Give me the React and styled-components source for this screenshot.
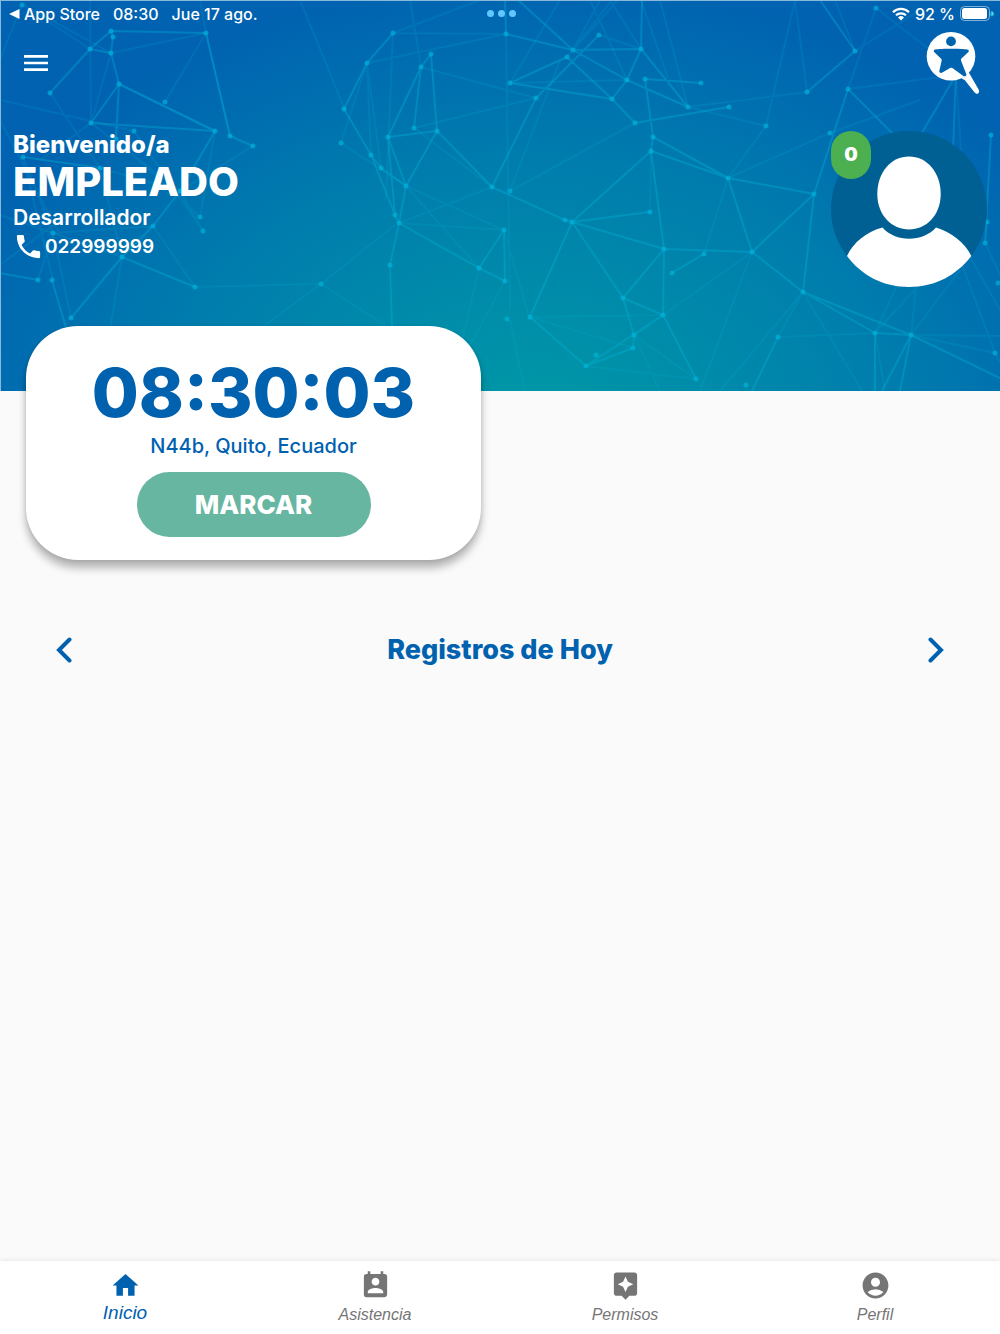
import React from "react";
import styled, { createGlobalStyle } from "styled-components";
import {
  MdHome,
  MdPermContactCalendar,
  MdAssistant,
  MdAccountCircle,
  MdMenu,
  MdPhone,
} from "react-icons/md";

const GlobalStyle = createGlobalStyle`
  *, *::before, *::after { box-sizing: border-box; }
  body {
    margin: 0;
    background: #fafafa;
    font-family: Inter, Roboto, "Liberation Sans", sans-serif;
  }
  h1, h2, p { margin: 0; }
  button { font-family: inherit; border: 0; padding: 0; cursor: pointer; }
`;

const Screen = styled.div`
  min-height: 100vh;
  display: flex;
  flex-direction: column;
`;

const Header = styled.header`
  display: grid;
  border-top: 1px solid #86b9dc;
  border-left: 1px solid #86b9dc;
  background: radial-gradient(ellipse 62% 114% at 53% 108%, #0099a6 0%, #008aaa 32%, #007cad 60%, #006eb0 82%, #0062b0 100%);
  color: #fff;
  overflow: hidden;
`;

const Network = styled.svg`
  grid-area: 1 / 1;
  width: 100%;
  height: 390px;
`;

const HeaderContent = styled.div`
  grid-area: 1 / 1;
  z-index: 1;
  display: flex;
  flex-direction: column;
`;

const StatusBar = styled.div`
  display: grid;
  grid-template-columns: 1fr auto 1fr;
  align-items: center;
  height: 25px;
  padding: 0 6px 0 8px;
  font-size: 16px;
  font-weight: 500;
  line-height: 20px;
`;

const StatusGroup = styled.div`
  display: flex;
  align-items: center;
  justify-content: ${(p) => (p.$end ? "flex-end" : "flex-start")};
  gap: ${(p) => p.$gap}px;
`;

const BackLink = styled.a`
  display: flex;
  align-items: center;
  gap: 4px;
  color: inherit;
  text-decoration: none;
`;

const Dots = styled.button`
  display: flex;
  gap: 4px;
  background: none;
`;

const Dot = styled.span`
  width: 7px;
  height: 7px;
  border-radius: 50%;
  background: #62c6ff;
`;

const Toolbar = styled.div`
  display: flex;
  align-items: center;
  justify-content: space-between;
  height: 74px;
  padding: 0 20px 0 19px;
`;

const IconButton = styled.button`
  display: flex;
  background: none;
  color: ${(p) => p.$color || "#fff"};
`;

const Profile = styled.section`
  display: flex;
  justify-content: space-between;
  align-items: flex-start;
  padding: 31px 13px 0 12px;
`;

const Person = styled.div`
  display: flex;
  flex-direction: column;
`;

const Greeting = styled.p`
  font-size: 24px;
  font-weight: 800;
  line-height: 28px;
`;

const Name = styled.h1`
  font-size: 40px;
  font-weight: 800;
  line-height: 46px;
`;

const Role = styled.p`
  font-size: 21px;
  font-weight: 600;
  line-height: 26px;
`;

const Phone = styled.a`
  display: flex;
  align-items: center;
  gap: 1px;
  color: inherit;
  font-size: 19px;
  font-weight: 600;
  line-height: 28px;
  text-decoration: none;
`;

const AvatarButton = styled.button`
  position: relative;
  width: 156px;
  height: 156px;
  border-radius: 50%;
  background: #005f93;
`;

const Badge = styled.span`
  position: absolute;
  top: 0;
  left: 0;
  width: 40px;
  height: 48px;
  border-radius: 20px;
  background: #4caf50;
  color: #fff;
  font-size: 19px;
  font-weight: 900;
  line-height: 48px;
  text-align: center;
`;

const Main = styled.main`
  flex: 1;
`;

const ClockCard = styled.section`
  position: relative;
  z-index: 2;
  display: flex;
  flex-direction: column;
  align-items: center;
  width: 46%;
  min-width: 340px;
  max-width: 455px;
  margin: -65px 0 0 26px;
  padding: 32px 16px 23px;
  border-radius: 52px;
  background: #fff;
  box-shadow: 0 8px 9px rgba(0, 0, 0, 0.28), 0 1px 4px rgba(0, 0, 0, 0.1);
  color: #0061af;
`;

const Clock = styled.time`
  font-size: 68px;
  font-weight: 800;
  line-height: 68px;
`;

const Place = styled.p`
  margin: 8px 0 14px;
  font-size: 20px;
  font-weight: 500;
  line-height: 24px;
`;

const MarkButton = styled.button`
  width: 234px;
  height: 65px;
  border-radius: 33px;
  background: #66b6a1;
  color: #fff;
  font-size: 26px;
  font-weight: 800;
`;

const DayPicker = styled.section`
  display: flex;
  align-items: center;
  justify-content: space-between;
  padding: 74px 56px 0;
  color: #0061af;
`;

const DayTitle = styled.h2`
  font-size: 27px;
  font-weight: 800;
  line-height: 32px;
`;

const TabBar = styled.nav`
  display: grid;
  grid-template-columns: repeat(4, 1fr);
  height: 73px;
  background: #fff;
  box-shadow: 0 -1px 4px rgba(0, 0, 0, 0.08);
`;

const Tab = styled.a`
  display: flex;
  flex-direction: column;
  align-items: center;
  padding-top: 9px;
  gap: ${(p) => (p.$active ? 1 : 4)}px;
  color: ${(p) => (p.$active ? "#0061af" : "#757575")};
  font-family: "Liberation Sans", Arial, sans-serif;
  font-size: ${(p) => (p.$active ? 19 : 16)}px;
  font-style: italic;
  line-height: ${(p) => (p.$active ? 22 : 20)}px;
  text-decoration: none;
`;

const bright = [
  [111,31,90,49],[90,49,50,93],[111,31,113,37],[113,37,111,53],[90,49,111,53],[111,31,206,33],
  [111,53,119,84],[119,84,91,123],[91,123,215,131],[119,84,215,131],[119,84,116,139],
  [230,136,253,146],[206,33,230,136],[215,131,180,191],[180,191,153,226],[153,226,122,257],[122,257,71,318],
  [23,157,100,168],[38,280,0,273],[52,280,66,328],[122,257,195,287],
  [393,33,367,63],[367,63,344,109],[344,109,371,155],[371,155,381,168],[381,168,406,186],[371,155,395,215],
  [506,34,573,50],[506,34,505,0],[573,50,641,49],[573,50,627,80],[573,50,518,0],
  [567,57,510,83],[567,57,612,99],[599,35,536,98],[510,83,612,99],[641,49,627,80],[627,80,612,99],
  [612,99,635,123],[635,123,729,107],[627,80,688,107],[645,79,701,83],[641,49,688,107],[641,49,642,0],
  [431,54,421,67],[421,67,414,128],[431,54,437,131],[421,67,388,137],[388,137,437,131],
  [388,137,406,186],[437,131,406,186],[437,131,492,187],[388,137,395,215],[406,186,399,223],
  [395,215,399,223],[399,223,390,265],[390,265,392,330],[399,223,479,268],[479,268,505,281],[479,268,504,230],
  [504,230,505,281],[492,187,565,220],[492,187,536,98],[565,220,572,222],[572,222,651,151],
  [572,222,650,212],[572,222,664,249],[572,222,623,298],[572,222,530,317],[645,79,653,137],[653,137,651,151],
  [651,151,664,249],[653,137,728,178],[651,151,728,178],[664,249,623,298],[664,249,663,315],
  [623,298,663,315],[623,298,634,335],[663,315,634,335],[663,315,586,366],[633,348,586,366],[586,366,530,317],
  [634,335,633,348],[663,315,696,379],[664,249,752,252],[672,273,704,254],[728,178,752,252],
  [728,178,814,194],[752,252,814,194],[752,252,803,292],[814,194,803,292],
  [814,194,848,89],[803,292,875,333],[803,292,911,335],[778,337,752,391],
  [875,333,911,335],[911,335,1000,378],[911,335,882,391],[911,335,900,391],[875,333,875,391],
  [848,89,893,134],[807,92,855,51],[855,51,820,0],
  [956,75,920,136],[956,75,953,150],[991,135,985,243],[985,243,987,222],
];

const faint = [
  [22,4,0,60],[22,4,90,49],[22,4,111,53],[90,0,91,123],[111,53,91,123],[111,53,206,33],[206,33,200,0],
  [165,102,206,33],[230,136,206,33],[134,131,203,231],[0,100,134,131],[119,84,215,131],[23,157,53,233],
  [50,93,100,168],[0,120,60,235],[0,215,53,233],[0,265,60,220],[23,157,53,280],[91,123,180,191],
  [91,123,40,160],[116,139,200,217],[100,168,122,257],[100,168,180,191],[53,233,153,226],
  [53,233,71,318],[53,233,38,280],[53,233,122,257],[180,191,253,146],[180,191,203,231],[215,131,200,217],
  [300,0,345,110],[153,226,195,287],[195,287,321,284],
  [122,257,110,330],[321,284,385,325],[321,284,395,225],[265,325,321,284],
  [393,33,386,200],[393,33,480,0],[393,33,506,34],[367,63,506,34],[367,63,381,168],[367,63,371,155],
  [341,143,367,63],[341,143,406,186],[410,0,421,67],[421,67,536,98],[414,128,536,98],[414,128,492,187],
  [506,34,510,310],[510,83,627,80],[510,83,560,0],[510,191,560,60],[510,191,635,123],[492,187,399,223],
  [573,50,600,0],[573,50,618,0],[567,57,612,0],[641,49,610,0],[627,80,590,0],[599,35,641,49],
  [668,78,641,0],[688,107,660,0],[688,107,807,92],[688,107,766,126],[766,126,728,178],
  [807,92,795,0],[766,126,795,0],[855,51,835,0],[855,51,920,10],[848,89,876,8],[848,89,956,75],
  [876,8,930,50],[830,133,728,178],[830,133,920,100],[406,186,504,230],[956,75,961,150],
  [406,186,479,268],[399,223,504,230],[479,268,460,350],[505,281,462,360],[985,243,1000,275],
  [504,230,530,320],[510,320,525,391],[530,317,663,315],[530,317,633,348],[586,366,696,379],
  [634,335,696,379],[650,212,651,151],[803,292,720,391],[752,252,700,391],[752,252,663,315],
  [803,292,862,391],[803,292,778,337],[778,337,875,333],[875,333,960,240],[911,335,960,270],
  [875,333,897,285],[911,335,916,287],[875,333,885,391],[911,335,1000,336],[995,353,1000,363],
  [953,240,995,353],[911,335,995,353],[955,230,1000,310],[728,178,704,254],[634,335,660,391],
];

const nodes = [
  [111,31],[113,37],[90,49],[111,53],[50,93],[119,84],[91,123],[134,131],[116,139],[165,102],[206,33],
  [215,131],[230,136],[253,146],[23,157],[100,168],[180,191],[153,226],[53,233],[122,257],[203,231],[200,217],
  [38,280],[52,280],[71,318],[195,287],[321,284],[22,5],[393,33],[367,63],[344,109],[341,143],[371,155],
  [381,168],[406,186],[431,54],[421,67],[414,128],[388,137],[437,131],[506,34],[573,50],[567,57],[510,83],
  [536,98],[599,35],[641,49],[627,80],[612,99],[635,123],[645,79],[653,137],[651,151],[492,187],[510,191],
  [395,215],[399,223],[390,265],[504,230],[479,268],[505,281],[507,319],[530,317],[565,220],[572,222],
  [650,212],[664,249],[623,298],[663,315],[634,335],[633,348],[586,366],[596,355],[701,83],[688,107],
  [729,107],[766,126],[807,92],[855,51],[876,8],[848,89],[830,133],[814,194],[728,178],[991,135],[704,254],
  [672,273],[752,252],[803,292],[778,337],[746,385],[696,379],[875,333],[911,335],[995,353],[985,243],
  [987,222],[998,283],[992,14],
];

function toPath(lines) {
  return lines.map(([a, b, c, d]) => `M${a} ${b}L${c} ${d}`).join("");
}

function NetworkArt() {
  return (
    <Network viewBox="1 1 999 390" preserveAspectRatio="xMidYMid slice" aria-hidden="true">
      <g fill="none" stroke="#00b4dc">
        <path d={toPath(faint)} strokeWidth="2" opacity="0.17" />
        <path d={toPath(bright)} strokeWidth="2" opacity="0.36" />
      </g>
      <g fill="#00b8e0" opacity="0.62">
        {nodes.map(([x, y]) => (
          <circle key={`${x}-${y}`} cx={x} cy={y} r="2.5" />
        ))}
      </g>
    </Network>
  );
}

function WifiIcon() {
  return (
    <svg width="18" height="14" viewBox="0 0 18 14" aria-hidden="true">
      <g fill="none" stroke="#fff" strokeWidth="2.2">
        <path d="M1 5.2a11.4 11.4 0 0 1 16 0" />
        <path d="M4 8.3a7.2 7.2 0 0 1 10 0" />
      </g>
      <path d="M9 13.4l-3-3a4.3 4.3 0 0 1 6 0z" fill="#fff" />
    </svg>
  );
}

function BatteryIcon() {
  return (
    <svg width="34" height="15" viewBox="0 0 34 15" aria-hidden="true">
      <rect x="0.5" y="0.5" width="29" height="14" rx="4" fill="none" stroke="#fff" strokeOpacity="0.5" />
      <rect x="2" y="2" width="25" height="11" rx="2.5" fill="#fff" />
      <path d="M31.5 5v5c1-.4 1.8-1.3 1.8-2.5s-.8-2.1-1.8-2.5z" fill="#fff" fillOpacity="0.5" />
    </svg>
  );
}

function Logo() {
  return (
    <svg width="54" height="64" viewBox="926 31 54 64" role="img" aria-label="Logo">
      <circle cx="951" cy="56.3" r="24.3" fill="#fff" />
      <path d="M961.5 78.500l5.500-6.500c1.200 0 2.200 1 3 2.500l8.600 15c1 1.800.4 3.300-.6 4-1.300.7-2.500.1-3.600-1.200l-9.700-12.200z" fill="#fff" />
      <circle cx="951" cy="41.4" r="4.9" fill="#0063b0" />
      <path
        d="M935.600 49.500c5-1 25.500-1 31.300-.1 2 .2 2.600 1.700 1.200 2.900l-6.400 5.900c-.8.800-1 1.500-.6 2.500l5.300 13.800c.3 1.500-1.300 2.200-2.700 1.700l-11.300-8.100c-.8-.6-1.500-.6-2.300-.1l-7.700 4.600c-1.900 1-3.500-.2-3-2.100l2.200-9.600c.2-1 0-1.700-.7-2.400l-6.500-6.200c-1.300-1.300-.6-3 1.200-2.800z"
        fill="#0063b0"
      />
    </svg>
  );
}

function Silhouette() {
  return (
    <svg width="156" height="156" viewBox="0 0 156 156" aria-hidden="true">
      <path d="M78 25.5c18 0 31.7 16 31.7 37.5S95 98.5 78 98.5 46.3 84.5 46.3 63 60 25.5 78 25.5z" fill="#fff" />
      <path d="M51.5 96.5c13 15 40 15 53.5 0 15 4.5 29 15 35.3 28.500C126 144 104 156 78 156s-48-12-62-31c6-13.500 20-24.500 35.500-28.500z" fill="#fff" />
    </svg>
  );
}

function Chevron({ right }) {
  return (
    <svg width="16" height="26" viewBox="0 0 16 26" aria-hidden="true">
      <path
        d={right ? "M2.500 2.500L13 13 2.500 23.500" : "M13.500 2.500L3 13l10.500 10.500"}
        fill="none"
        stroke="currentColor"
        strokeWidth="4"
        strokeLinecap="round"
      />
    </svg>
  );
}

const tabs = [
  { label: "Inicio", Icon: MdHome, active: true },
  { label: "Asistencia", Icon: MdPermContactCalendar },
  { label: "Permisos", Icon: MdAssistant },
  { label: "Perfil", Icon: MdAccountCircle },
];

export default function App() {
  return (
    <Screen>
      <GlobalStyle />
      <Header>
        <NetworkArt />
        <HeaderContent>
          <StatusBar>
            <StatusGroup $gap={13}>
              <BackLink href="#app-store">
                <svg width="11" height="10" viewBox="0 0 11 10" aria-hidden="true">
                  <path d="M0 5L10.5 0v10z" fill="#fff" />
                </svg>
                App Store
              </BackLink>
              <time>08:30</time>
              <span>Jue 17 ago.</span>
            </StatusGroup>
            <Dots aria-label="Multitarea">
              <Dot />
              <Dot />
              <Dot />
            </Dots>
            <StatusGroup $end $gap={5}>
              <WifiIcon />
              <span>92 %</span>
              <BatteryIcon />
            </StatusGroup>
          </StatusBar>
          <Toolbar>
            <IconButton aria-label="Menú">
              <MdMenu size={32} />
            </IconButton>
            <Logo />
          </Toolbar>
          <Profile>
            <Person>
              <Greeting>Bienvenido/a</Greeting>
              <Name>EMPLEADO</Name>
              <Role>Desarrollador</Role>
              <Phone href="tel:022999999">
                <MdPhone size={31} />
                022999999
              </Phone>
            </Person>
            <AvatarButton aria-label="Perfil, 0 notificaciones">
              <Silhouette />
              <Badge>0</Badge>
            </AvatarButton>
          </Profile>
        </HeaderContent>
      </Header>
      <Main>
        <ClockCard>
          <Clock>08:30:03</Clock>
          <Place>N44b, Quito, Ecuador</Place>
          <MarkButton>MARCAR</MarkButton>
        </ClockCard>
        <DayPicker>
          <IconButton $color="#0061af" aria-label="Día anterior">
            <Chevron />
          </IconButton>
          <DayTitle>Registros de Hoy</DayTitle>
          <IconButton $color="#0061af" aria-label="Día siguiente">
            <Chevron right />
          </IconButton>
        </DayPicker>
      </Main>
      <TabBar>
        {tabs.map(({ label, Icon, active }) => (
          <Tab key={label} href={`#${label.toLowerCase()}`} $active={active}>
            <Icon size={31} />
            {label}
          </Tab>
        ))}
      </TabBar>
    </Screen>
  );
}
